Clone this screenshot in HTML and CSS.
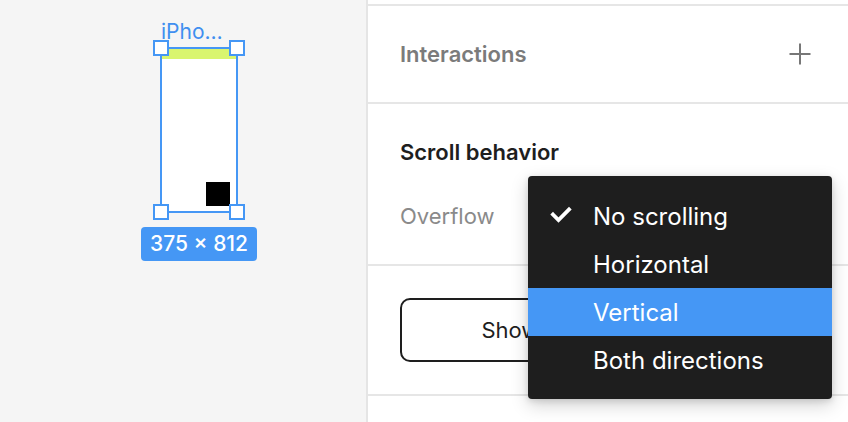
FILE: index.html
```html
<!DOCTYPE html>
<html>
<head>
<meta charset="utf-8">
<link rel="stylesheet" href="styles.css">
</head>
<body>
<div class="app">
  <div class="canvas">
    <div class="frame-label">iPho…</div>
    <div class="frame">
      <div class="frame-bar"></div>
      <div class="frame-square"></div>
    </div>
    <div class="handle h-tl"></div>
    <div class="handle h-tr"></div>
    <div class="handle h-bl"></div>
    <div class="handle h-br"></div>
    <div class="dim-badge">375 × 812</div>
  </div>
  <div class="panel">
    <div class="sec sec-top"></div>
    <div class="sec sec-interactions">
      <span class="sec-heading muted">Interactions</span>
      <svg class="plus" width="24" height="24" viewBox="0 0 24 24"><path d="M12 1.5v21M1.5 12h21" stroke="#777" stroke-width="2" fill="none"/></svg>
    </div>
    <div class="sec sec-scroll">
      <div class="sec-heading">Scroll behavior</div>
      <div class="row-label">Overflow</div>
    </div>
    <div class="sec sec-button">
      <div class="btn">Show prototype settings</div>
    </div>
    <div class="sec-rest"></div>
  </div>
</div>
<div class="menu">
  <div class="menu-item">
    <svg class="check" width="24" height="24" viewBox="0 0 24 24"><path d="M4 11.5l5.5 5.5L20 6.5" stroke="#fff" stroke-width="3.8" fill="none" stroke-linecap="square"/></svg>
    <span>No scrolling</span>
  </div>
  <div class="menu-item"><span>Horizontal</span></div>
  <div class="menu-item active"><span>Vertical</span></div>
  <div class="menu-item"><span>Both directions</span></div>
</div>
</body>
</html>
```
FILE: styles.css
```css
* { box-sizing: border-box; }
html, body { margin: 0; padding: 0; }
body {
  width: 848px;
  height: 422px;
  overflow: hidden;
  font-family: Inter, "Liberation Sans", sans-serif;
  background: #fff;
  position: relative;
}
.app {
  display: flex;
  height: 422px;
}
.canvas {
  width: 368px;
  flex: none;
  background: #f5f5f5;
  border-right: 2px solid #e5e5e5;
  position: relative;
}
.frame-label {
  position: absolute;
  left: 161px;
  top: 19px;
  font-size: 21px;
  line-height: 26px;
  color: #3f8ff0;
}
.frame {
  position: absolute;
  left: 160px;
  top: 47px;
  width: 78px;
  height: 166px;
  border: 2px solid #4597f5;
  background: #fff;
}
.frame-bar {
  height: 10px;
  background: #d9f56f;
}
.frame-square {
  position: absolute;
  left: 44px;
  top: 133px;
  width: 24px;
  height: 24px;
  background: #000;
}
.handle {
  position: absolute;
  width: 16px;
  height: 16px;
  background: #fff;
  border: 2px solid #4597f5;
}
.h-tl { left: 153px; top: 40px; }
.h-tr { left: 229px; top: 40px; }
.h-bl { left: 153px; top: 204px; }
.h-br { left: 229px; top: 204px; }
.dim-badge {
  position: absolute;
  left: 141px;
  top: 227px;
  width: 116px;
  height: 34px;
  border-radius: 4px;
  background: #4597f5;
  color: #fff;
  font-size: 21px;
  font-weight: 500;
  line-height: 34px;
  text-align: center;
}
.panel {
  flex: 1;
  display: flex;
  flex-direction: column;
}
.sec {
  border-bottom: 2px solid #e6e6e6;
  flex: none;
}
.sec-top { height: 6px; }
.sec-interactions {
  height: 98px;
  padding: 0 36px 0 32px;
  display: flex;
  align-items: center;
  justify-content: space-between;
}
.sec-heading {
  font-size: 22px;
  font-weight: 600;
  line-height: 32px;
  color: #1e1e1e;
}
.muted { color: #7b7b7b; }
.plus { display: block; }
.sec-scroll {
  height: 162px;
  padding: 32px 32px 0;
  display: flex;
  flex-direction: column;
  gap: 32px;
}
.row-label {
  font-size: 22px;
  line-height: 32px;
  color: #8a8a8a;
}
.sec-button {
  height: 130px;
  padding: 32px;
}
.btn {
  height: 64px;
  border: 2px solid #1e1e1e;
  border-radius: 10px;
  display: flex;
  align-items: center;
  justify-content: center;
  font-size: 22px;
  color: #1e1e1e;
}
.menu {
  position: absolute;
  left: 528px;
  top: 176px;
  width: 304px;
  height: 223px;
  padding: 16px 0 15px;
  background: #1e1e1e;
  border-radius: 4px;
  box-shadow: 0 6px 18px rgba(0,0,0,0.18), 0 2px 6px rgba(0,0,0,0.12);
}
.menu-item {
  height: 48px;
  position: relative;
  padding-left: 65px;
  display: flex;
  align-items: center;
  font-size: 24px;
  color: #fff;
}
.menu-item.active { background: #4597f5; }
.check {
  position: absolute;
  left: 21px;
  top: 11px;
}
```
